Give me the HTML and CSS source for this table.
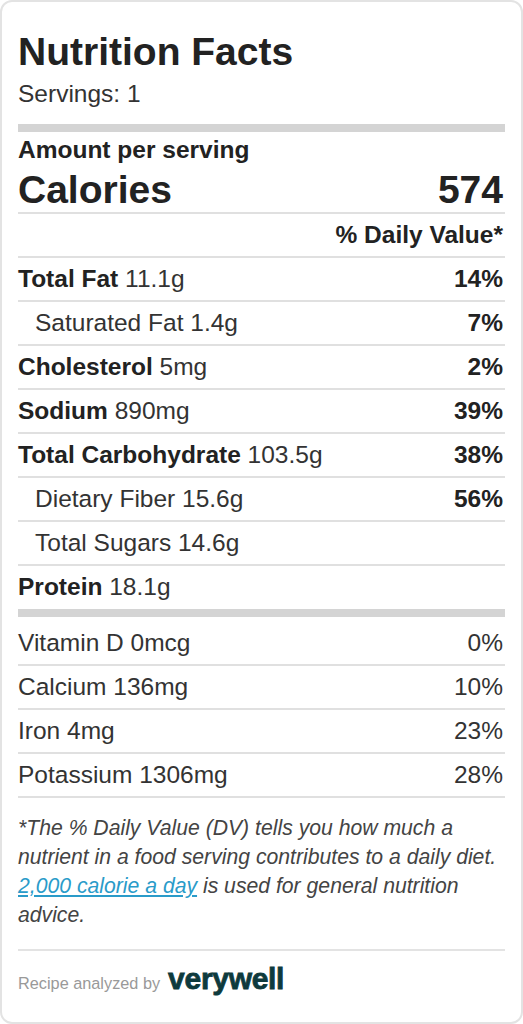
FILE: index.html
```html
<!DOCTYPE html>
<html lang="en">

<head>
    <meta charset="UTF-8">
    <meta name="viewport" content="width=device-width, initial-scale=1.0">
    <title>Nutrition Facts</title>
    <link rel="stylesheet" href="styles.css">
</head>

<body>
    <div class="label">
        <h1 class="title">Nutrition Facts</h1>
        <p class="servings">Servings: 1</p>
        <div class="bar"></div>
        <p class="amount">Amount per serving</p>
        <div class="calories">
            <span>Calories</span>
            <span>574</span>
        </div>
        <div class="row dv-head"><b>% Daily Value*</b></div>
        <div class="row"><span><b>Total Fat</b> 11.1g</span><b>14%</b></div>
        <div class="row sub"><span>Saturated Fat 1.4g</span><b>7%</b></div>
        <div class="row"><span><b>Cholesterol</b> 5mg</span><b>2%</b></div>
        <div class="row"><span><b>Sodium</b> 890mg</span><b>39%</b></div>
        <div class="row"><span><b>Total Carbohydrate</b> 103.5g</span><b>38%</b></div>
        <div class="row sub"><span>Dietary Fiber 15.6g</span><b>56%</b></div>
        <div class="row sub"><span>Total Sugars 14.6g</span></div>
        <div class="row last"><span><b>Protein</b> 18.1g</span></div>
        <div class="bar mid"></div>
        <div class="row"><span>Vitamin D 0mcg</span><span>0%</span></div>
        <div class="row"><span>Calcium 136mg</span><span>10%</span></div>
        <div class="row"><span>Iron 4mg</span><span>23%</span></div>
        <div class="row"><span>Potassium 1306mg</span><span>28%</span></div>
        <p class="note">*The % Daily Value (DV) tells you how much a nutrient in a food serving contributes to a daily diet. <a href="#">2,000 calorie a day</a> is used for general nutrition advice.</p>
        <div class="footer">
            <span class="analyzed">Recipe analyzed by</span>
            <span class="logo">verywell</span>
        </div>
    </div>
</body>

</html>
```

FILE: styles.css
```css
* {
    box-sizing: border-box;
    margin: 0;
    padding: 0;
}

body {
    font-family: "Liberation Sans", Arial, sans-serif;
    background-color: white;
    color: #333;
}

.label {
    border: 2px solid #e3e3e3;
    border-radius: 12px;
    padding: 28px 16px 25px;
    min-height: 1024px;
}

.title {
    font-size: 39px;
    line-height: 44px;
    font-weight: bold;
    color: #222;
}

.servings {
    font-size: 24.5px;
    line-height: 28px;
    margin-top: 6px;
}

.bar {
    height: 8px;
    background: #d4d4d4;
    margin: 16px 0 4px;
}

.bar.mid {
    margin: 1px 0 5px;
}

.amount {
    font-size: 24.5px;
    line-height: 28px;
    font-weight: bold;
    color: #222;
}

.calories {
    display: flex;
    justify-content: space-between;
    font-size: 39px;
    line-height: 44px;
    font-weight: bold;
    color: #222;
    margin-top: 4px;
    border-bottom: 2px solid #e0e0e0;
    padding-right: 2px;
}

.row {
    display: flex;
    justify-content: space-between;
    font-size: 24.5px;
    line-height: 28px;
    padding: 7px 2px 7px 0;
    border-bottom: 2px solid #e0e0e0;
}

.row b {
    color: #222;
}

.row.sub {
    padding-left: 17px;
}

.row.last {
    border-bottom: none;
}

.dv-head {
    justify-content: flex-end;
}

.note {
    font-size: 21.2px;
    line-height: 29px;
    font-style: italic;
    color: #444;
    margin-top: 15px;
    padding-bottom: 20px;
    border-bottom: 2px solid #e3e3e3;
}

.note a {
    color: #2a9bc9;
}

.footer {
    display: flex;
    align-items: baseline;
    gap: 8px;
    margin-top: 10px;
}

.analyzed {
    font-size: 16.3px;
    color: #999;
}

.logo {
    font-size: 30px;
    line-height: 36px;
    font-weight: bold;
    color: #0e3a3d;
    letter-spacing: -0.3px;
    -webkit-text-stroke: 0.8px #0e3a3d;
}
```
